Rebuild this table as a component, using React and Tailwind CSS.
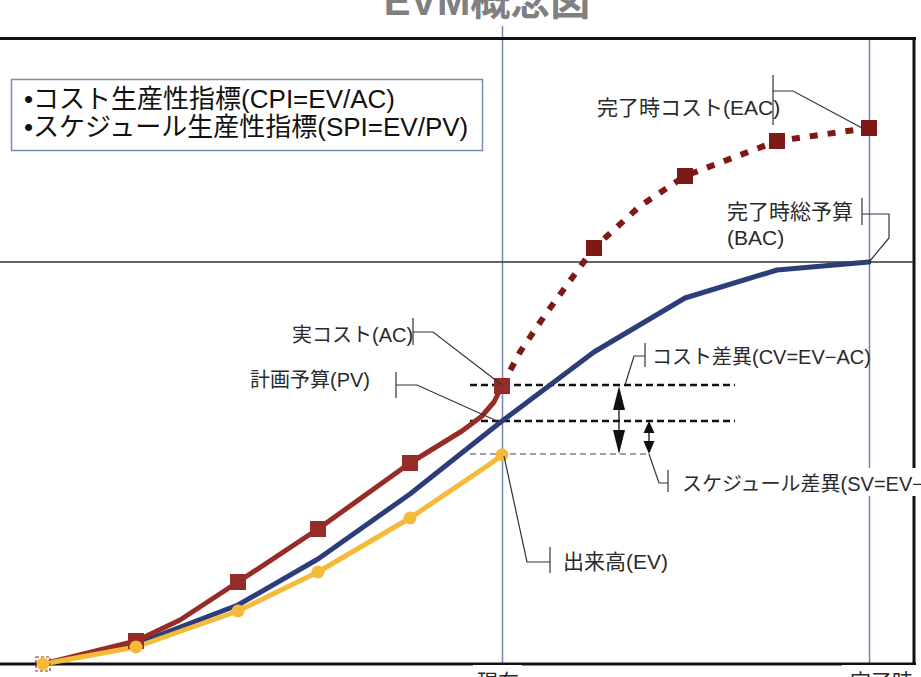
import React from "react";

const FONT = '"Liberation Sans", "Noto Sans CJK JP", sans-serif';

const pl = (pts) => pts.map((p) => p.join(",")).join(" ");

const blue = [
  [43, 664], [136, 644], [238, 605], [318, 559], [410, 494], [502, 421],
  [594, 352], [685, 298], [777, 270], [869, 262],
];
const redLine = [[43, 664], [136, 641], [180, 620], [238, 582], [318, 529], [410, 463], [462, 431], [482, 416], [494, 402], [502, 386]];
const redMarks = [[136, 641], [238, 582], [318, 529], [410, 463], [502, 386]];
const redDash = [[502, 386], [520, 352], [545, 315], [572, 278], [594, 248], [640, 206], [685, 176], [777, 141], [869, 128]];
const redDashMarks = [[594, 248], [685, 176], [777, 141], [869, 128]];
const yellow = [[43, 664], [136, 647], [238, 611], [318, 572], [410, 518], [490, 464], [502, 455]];
const yellowMarks = [[43, 664], [136, 647], [238, 611], [318, 572], [410, 518], [502, 455]];

const RED = "#962b27";
const DRED = "#7e1a15";
const NAVY = "#2c3d7a";
const YEL = "#f4bb3a";
const VBLUE = "#7484b6";
const INK = "#2a2a2a";

function Label({ x, y, size = 21, children, anchor = "start" }) {
  return (
    <text x={x} y={y} fontSize={size} fill={INK} fontFamily={FONT} textAnchor={anchor}>
      {children}
    </text>
  );
}

export default function App() {
  return (
    <div className="relative w-[921px] h-[677px] overflow-hidden bg-white">
      <svg width="921" height="677" viewBox="0 0 921 677" className="block">
        {/* title */}
        <text x="487" y="15" fontSize="40" fontWeight="bold" fill="#808080" textAnchor="middle" fontFamily={FONT}>
          EVM概念図
        </text>

        {/* vertical guide lines */}
        <line x1="502.5" y1="26" x2="502.5" y2="664" stroke={VBLUE} strokeWidth="1.5" />
        <line x1="869.5" y1="38" x2="869.5" y2="664" stroke={VBLUE} strokeWidth="1.5" />

        {/* frame */}
        <line x1="0" y1="38.5" x2="916" y2="38.5" stroke="#111" strokeWidth="3" />
        <line x1="914" y1="37" x2="914" y2="666" stroke="#111" strokeWidth="3" />
        <line x1="0" y1="664" x2="916" y2="664" stroke="#111" strokeWidth="3" />

        {/* BAC horizontal */}
        <line x1="0" y1="262" x2="914" y2="262" stroke="#333" strokeWidth="1.3" />

        {/* legend box */}
        <rect x="11.5" y="79.5" width="471" height="71" fill="white" stroke="#7b8ab4" strokeWidth="1.5" />
        <text x="24" y="108" fontSize="26" fill="#111" fontFamily={FONT}>
          •コスト生産性指標(CPI=EV/AC)
        </text>
        <text x="24" y="136" fontSize="26" fill="#111" fontFamily={FONT}>
          •スケジュール生産性指標(SPI=EV/PV)
        </text>

        {/* level dashed lines */}
        <line x1="470" y1="385" x2="735" y2="385" stroke="#111" strokeWidth="2.4" strokeDasharray="7 4" />
        <line x1="470" y1="421" x2="735" y2="421" stroke="#111" strokeWidth="2.4" strokeDasharray="7 4" />
        <line x1="470" y1="454" x2="648" y2="454" stroke="#444" strokeWidth="1.2" strokeDasharray="6 4" />

        {/* curves */}
        <polyline points={pl(blue)} fill="none" stroke={NAVY} strokeWidth="5" strokeLinejoin="round" strokeLinecap="round" />
        <polyline points={pl(redDash)} fill="none" stroke={DRED} strokeWidth="6" strokeDasharray="8 10" strokeLinejoin="round" />
        <polyline points={pl(redLine)} fill="none" stroke={RED} strokeWidth="5" strokeLinejoin="round" strokeLinecap="round" />
        <polyline points={pl(yellow)} fill="none" stroke={YEL} strokeWidth="5" strokeLinejoin="round" strokeLinecap="round" />

        {/* markers */}
        <rect x="36" y="657" width="14" height="14" fill="none" stroke={RED} strokeWidth="1.2" strokeDasharray="3 2" />
        {redMarks.map(([x, y], i) => (
          <rect key={"r" + i} x={x - 8} y={y - 8} width="16" height="16" fill={RED} />
        ))}
        {redDashMarks.map(([x, y], i) => (
          <rect key={"d" + i} x={x - 8} y={y - 8} width="16" height="16" fill={DRED} />
        ))}
        {yellowMarks.map(([x, y], i) => (
          <circle key={"y" + i} cx={x} cy={y} r="6.5" fill={YEL} />
        ))}

        {/* arrows */}
        <g stroke="#111" strokeWidth="1.3" fill="#111">
          <line x1="619" y1="395" x2="619" y2="445" />
          <polygon points="619,386 613,410 625,410" stroke="none" />
          <polygon points="619,454 613,430 625,430" stroke="none" />
          <line x1="649" y1="428" x2="649" y2="448" />
          <polygon points="649,421 643.5,433 654.5,433" stroke="none" />
          <polygon points="649,454 643.5,441 654.5,441" stroke="none" />
        </g>

        {/* leader lines */}
        <g stroke="#333" strokeWidth="1.2" fill="none">
          <polyline points="773,75 773,125" />
          <polyline points="773,91 793,91 862,128" />
          <polyline points="862,198 862,225" />
          <polyline points="862,214 889,214 889,238 869,262" />
          <polyline points="413,318 413,345" />
          <polyline points="413,332 433,332 502,385" />
          <polyline points="396,372 396,398" />
          <polyline points="396,385 417,385 497,421" />
          <polyline points="645,343 645,367" />
          <polyline points="645,356 634,356 625,385" />
          <polyline points="649,454 659,483 668,483" />
          <polyline points="668,470 668,492" />
          <polyline points="504,456 527,562 550,562" />
          <polyline points="550,547 550,573" />
        </g>

        {/* labels */}
        <Label x={597} y={115}>完了時コスト(EAC)</Label>
        <Label x={727} y={219}>完了時総予算</Label>
        <Label x={727} y={245}>(BAC)</Label>
        <Label x={292} y={342} size={20}>実コスト(AC)</Label>
        <Label x={250} y={387} size={20}>計画予算(PV)</Label>
        <Label x={652} y={364} size={20}>コスト差異(CV=EV−AC)</Label>
        <rect x="678" y="468" width="243" height="28" fill="white" />
        <Label x={682} y={491} size={20}>スケジュール差異(SV=EV−PV)</Label>
        <Label x={563} y={569}>出来高(EV)</Label>

        {/* bottom axis labels */}
        <rect x="473" y="665" width="49" height="12" fill="white" />
        <rect x="842" y="665" width="79" height="12" fill="white" />
        <Label x={477} y={689}>現在</Label>
        <Label x={850} y={689}>完了時</Label>
      </svg>
    </div>
  );
}
